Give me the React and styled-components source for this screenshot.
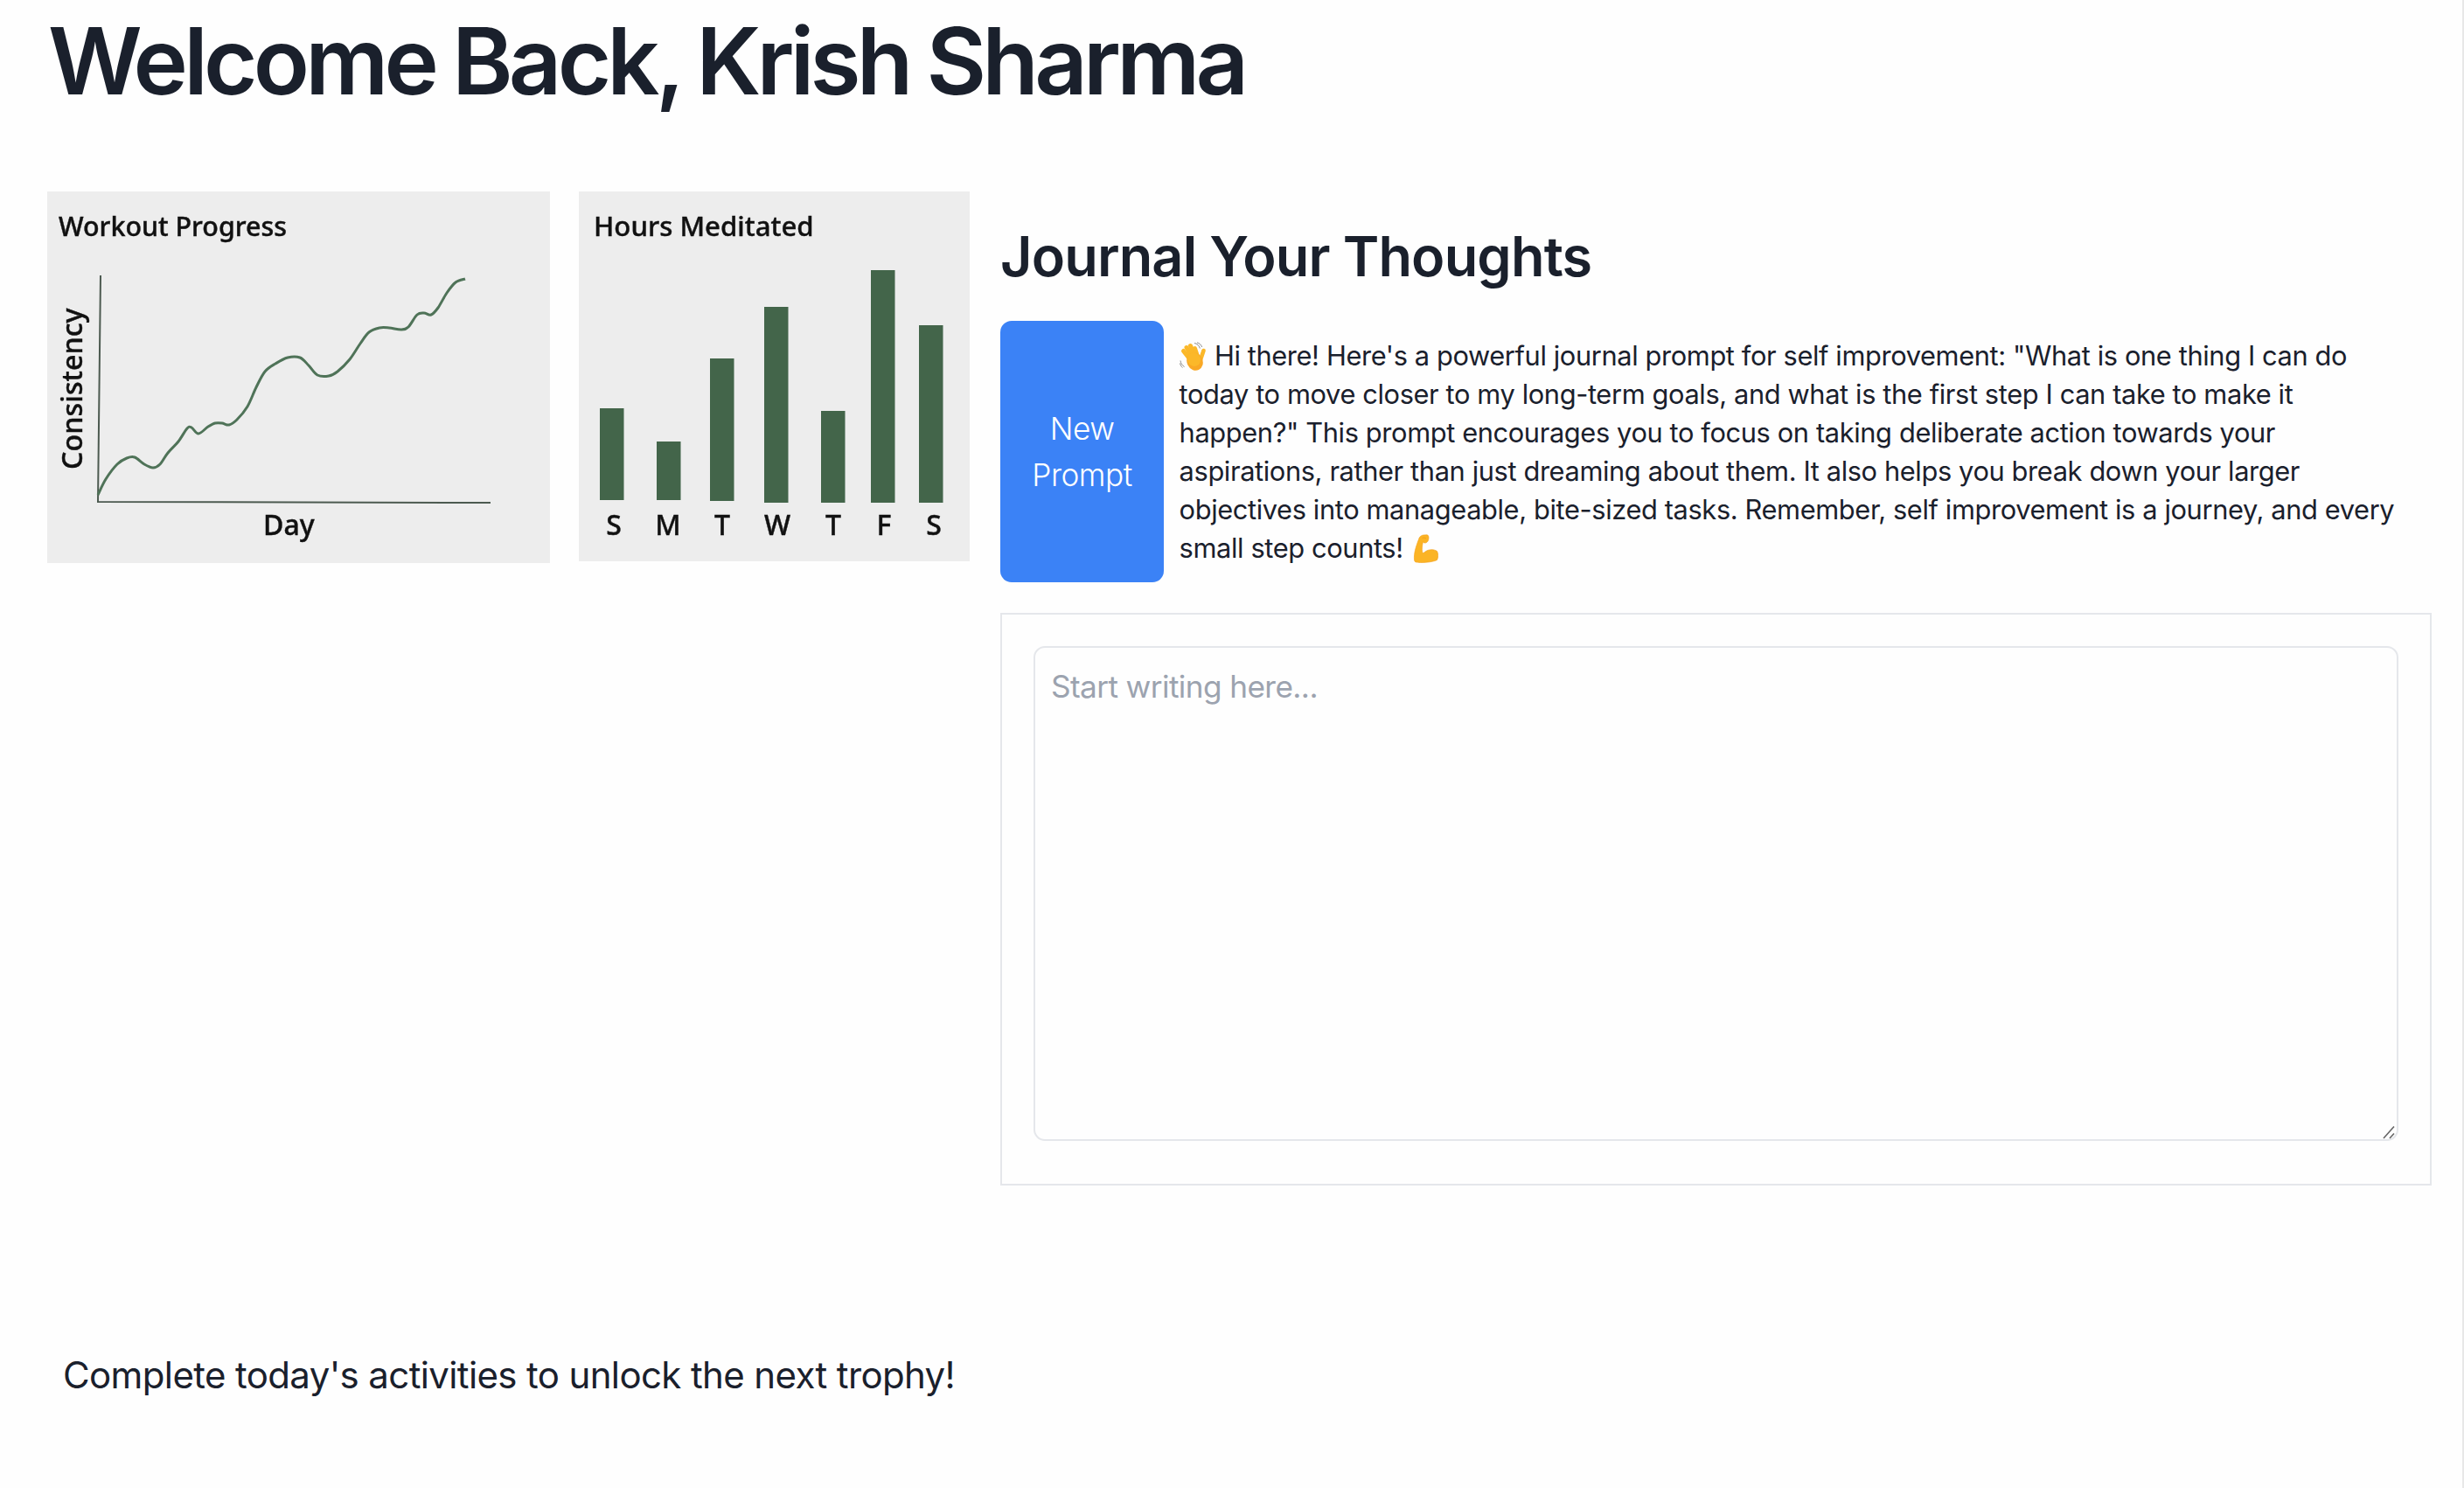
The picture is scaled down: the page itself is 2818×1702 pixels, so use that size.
import React from 'react';
import styled, { createGlobalStyle } from 'styled-components';

const GlobalStyle = createGlobalStyle`
  html, body {
    margin: 0;
    padding: 0;
    background: #fefefe;
  }
  body {
    font-family: Inter, "Liberation Sans", sans-serif;
    color: #1a202c;
  }
`;

const Page = styled.div`
  box-sizing: border-box;
  height: 1702px;
  border-right: 2px solid #e8e8e8;
  overflow: hidden;
`;

const Title = styled.h1`
  margin: 0;
  padding: 0 0 0 55px;
  height: 219px;
  font-size: 105.6px;
  line-height: 140px;
  font-weight: 600;
  letter-spacing: -4.8px;
  word-spacing: -2px;
`;

const Main = styled.div`
  display: flex;
  align-items: flex-start;
  padding-left: 54px;
`;

const Chart = styled.svg`
  display: block;
  flex: none;
  background: #ededed;
  margin-right: ${(p) => p.$gap}px;
  filter: blur(0.5px);
`;

const ChartText = styled.text`
  font-family: "Noto Sans", sans-serif;
  font-size: ${(p) => p.$size || 31}px;
  font-weight: 500;
  fill: #111;
  stroke: #111;
  stroke-width: 0.4px;
`;

const JournalColumn = styled.section`
  width: 1637px;
  flex: none;
`;

const JournalTitle = styled.h2`
  margin: 0;
  height: 148px;
  font-size: 63px;
  line-height: 148px;
  font-weight: 600;
  letter-spacing: -0.85px;
`;

const PromptRow = styled.div`
  display: flex;
  align-items: stretch;
`;

const PromptButton = styled.button`
  flex: none;
  width: 187px;
  padding: 0 35px;
  border: none;
  border-radius: 13px;
  background: #3b82f6;
  color: #fff;
  font-family: inherit;
  font-size: 35.2px;
  line-height: 52.8px;
  font-weight: 350;
  letter-spacing: -0.5px;
`;

const PromptText = styled.p`
  margin: 0;
  padding: 17.6px;
  font-size: 30.8px;
  line-height: 44px;
  letter-spacing: -0.38px;
`;

const Emoji = styled.svg`
  display: inline-block;
  width: 32px;
  height: 34px;
  vertical-align: -7px;
`;

const WriteBox = styled.div`
  box-sizing: border-box;
  margin-top: 35px;
  height: 655px;
  padding: 36px 36px 0;
  border: 2px solid #e5e7eb;
`;

const WriteAreaWrap = styled.div`
  position: relative;
`;

const WriteArea = styled.textarea`
  display: block;
  box-sizing: border-box;
  width: 100%;
  height: 566px;
  padding: 17.6px 18px;
  border: 2px solid #e5e7eb;
  border-radius: 13px;
  background: transparent;
  outline: none;
  resize: none;
  font-family: inherit;
  font-size: 35.2px;
  line-height: 52.8px;
  letter-spacing: -0.6px;
  color: #1a202c;
  &::placeholder {
    color: #9ca3af;
  }
`;

const ResizeGrip = styled.svg`
  position: absolute;
  right: 4px;
  bottom: 2px;
  width: 14px;
  height: 16px;
`;

const Footer = styled.p`
  margin: 0;
  padding: 184px 0 0 72px;
  font-size: 42px;
  line-height: 66px;
  letter-spacing: -0.63px;
`;

// curve traced off the reference, card pixels
const workoutPoints = [
  [58, 347], [67, 329], [80, 312], [91, 305], [100, 304], [111, 312], [121, 316], [129, 312],
  [138, 299], [150, 286], [160, 271], [165, 270], [173, 277], [184, 269], [192, 265], [200, 265],
  [208, 267], [217, 261], [229, 246], [239, 224], [249, 206], [261, 197], [275, 190], [289, 190],
  [299, 199], [309, 210], [322, 211], [332, 206], [346, 192], [358, 174], [368, 161], [380, 156],
  [391, 156], [405, 158], [413, 155], [423, 141], [431, 139], [439, 141], [447, 133], [457, 116],
  [467, 104], [478, 100],
];

const smoothPath = (pts) => {
  let d = `M${pts[0][0]} ${pts[0][1]}`;
  for (let i = 0; i < pts.length - 1; i++) {
    const p0 = pts[i - 1] || pts[i];
    const p1 = pts[i];
    const p2 = pts[i + 1];
    const p3 = pts[i + 2] || p2;
    const c1x = p1[0] + (p2[0] - p0[0]) / 6;
    const c1y = p1[1] + (p2[1] - p0[1]) / 6;
    const c2x = p2[0] - (p3[0] - p1[0]) / 6;
    const c2y = p2[1] - (p3[1] - p1[1]) / 6;
    d += ` C${c1x} ${c1y} ${c2x} ${c2y} ${p2[0]} ${p2[1]}`;
  }
  return d;
};

const WorkoutChart = () => (
  <Chart $gap={33} width="575" height="425" viewBox="0 0 575 425">
    <ChartText x="13" y="51" $size={30.4}>Workout Progress</ChartText>
    <ChartText x="0" y="0" transform="translate(40 318) rotate(-90)" $size={32.3}>Consistency</ChartText>
    <ChartText x="247" y="393" $size={32}>Day</ChartText>
    <path d="M61 96 L58 355 L507 356" fill="none" stroke="#4c5a50" strokeWidth="2" />
    <path d={smoothPath(workoutPoints)} fill="none" stroke="#4f7358" strokeWidth="3" />
  </Chart>
);

const meditationBars = [
  { x: 24, top: 248, bottom: 353, day: 'S', cx: 40 },
  { x: 89, top: 286, bottom: 353, day: 'M', cx: 102 },
  { x: 150, top: 191, bottom: 354, day: 'T', cx: 164 },
  { x: 212, top: 132, bottom: 356, day: 'W', cx: 227 },
  { x: 277, top: 251, bottom: 356, day: 'T', cx: 291 },
  { x: 334, top: 90, bottom: 356, day: 'F', cx: 349 },
  { x: 389, top: 153, bottom: 356, day: 'S', cx: 406 },
];

const MeditationChart = () => (
  <Chart $gap={35} width="447" height="423" viewBox="0 0 447 423">
    <ChartText x="17" y="51" $size={31.2}>Hours Meditated</ChartText>
    {meditationBars.map((bar, i) => (
      <g key={i}>
        <rect x={bar.x} y={bar.top} width="27.5" height={bar.bottom - bar.top} fill="#43654a" />
        <ChartText x={bar.cx} y="393" textAnchor="middle" $size={32}>{bar.day}</ChartText>
      </g>
    ))}
  </Chart>
);

const WaveEmoji = () => (
  <Emoji viewBox="0 0 32 34" aria-hidden="true">
    <g stroke="#fbb829" strokeLinecap="round" fill="none">
      <path d="M12 20 L4.5 10.5" strokeWidth="5" />
      <path d="M14 17 L8 6.5" strokeWidth="5" />
      <path d="M17 15 L12.5 4.5" strokeWidth="5" />
      <path d="M20 15 L17.5 7.5" strokeWidth="5" />
      <path d="M23.5 22 L27.5 10" strokeWidth="4.6" />
    </g>
    <ellipse cx="17.5" cy="22.5" rx="9" ry="10.5" transform="rotate(-25 17.5 22.5)" fill="#f9a825" />
    <ellipse cx="16.5" cy="20" rx="7.5" ry="8" transform="rotate(-25 16.5 20)" fill="#fbb829" />
    <path d="M17 1.5 C20 2 22.4 4 23.4 7.5 M20 .8 C22.5 1.4 25 3.5 25.6 6 M1 21.5 C1.4 24.5 3 27 5.5 28.5 M.5 24.5 C1 26.5 2 28.5 3.5 29.5" stroke="#8c8c8c" strokeWidth="1" fill="none" />
  </Emoji>
);

const MuscleEmoji = () => (
  <Emoji viewBox="-3 0 32 34" aria-hidden="true">
    <path d="M1.5 29 C1 22 3 15 6.5 6 C7 3 9.5 1.2 12 1 L16 .8 C18 1 18.4 4 17.6 6.5 C17 9 15 10.4 13 10 L11.4 9 C10.4 13 10 17 10.6 20.5 C11.4 22 12.4 21.6 14 20 C18 17 24 17 27.5 19.5 C29 22 29 27 27.5 29.5 C22 32.5 8 33 3.5 32 C2 31.8 1.6 30.5 1.5 29 Z" fill="#fbb425" stroke="#f39c12" strokeWidth="0.6" />
    <path d="M10.5 4.5 C12 3.8 14 4 15 5" stroke="#f39c12" strokeWidth="0.8" fill="none" />
  </Emoji>
);

const App = () => (
  <>
    <GlobalStyle />
    <Page>
      <Title>Welcome Back, Krish Sharma</Title>
      <Main>
        <WorkoutChart />
        <MeditationChart />
        <JournalColumn>
          <JournalTitle>Journal Your Thoughts</JournalTitle>
          <PromptRow>
            <PromptButton>New Prompt</PromptButton>
            <PromptText>
              <WaveEmoji /> Hi there! Here's a powerful journal prompt for self improvement: "What is one thing I can do today to move closer to my long-term goals, and what is the first step I can take to make it happen?" This prompt encourages you to focus on taking deliberate action towards your aspirations, rather than just dreaming about them. It also helps you break down your larger objectives into manageable, bite-sized tasks. Remember, self improvement is a journey, and every small step counts! <MuscleEmoji />
            </PromptText>
          </PromptRow>
          <WriteBox>
            <WriteAreaWrap>
              <WriteArea placeholder="Start writing here..." />
              <ResizeGrip viewBox="0 0 14 16" aria-hidden="true">
                <path d="M1 15 L13 1.5 M8 15 L13 9.5" stroke="#666" strokeWidth="1.6" fill="none" />
              </ResizeGrip>
            </WriteAreaWrap>
          </WriteBox>
        </JournalColumn>
      </Main>
      <Footer>Complete today's activities to unlock the next trophy!</Footer>
    </Page>
  </>
);

export default App;
